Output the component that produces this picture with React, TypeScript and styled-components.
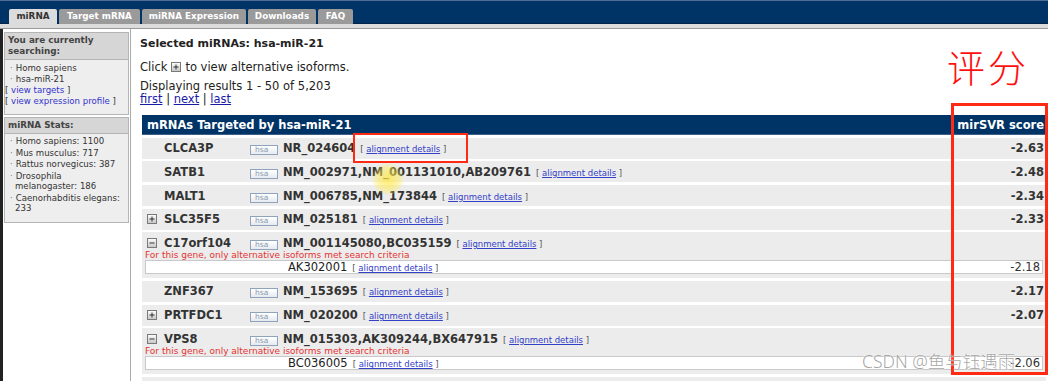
import React from 'react';
import styled, { createGlobalStyle } from 'styled-components';

const Global = createGlobalStyle`
  html, body { margin: 0; padding: 0; background: #fff; }
  body {
    font-family: "DejaVu Sans", Verdana, sans-serif;
    color: #222;
    overflow: hidden;
  }
`;

const Page = styled.div`
  width: 1048px;
  height: 381px;
  overflow: hidden;
  position: relative;
  display: flex;
  flex-direction: column;
`;

const TopBar = styled.div`
  height: 24px;
  box-sizing: border-box;
  background: #003366;
  border-top: 1px solid #4d6d92;
  border-bottom: 1px solid #00254d;
  display: flex;
  align-items: flex-end;
  padding-left: 9px;
  gap: 2px;
`;

const Tab = styled.div<{ $active?: boolean; $w: number }>`
  width: ${p => p.$w}px;
  height: 15px;
  margin-bottom: -1px;
  background: ${p => (p.$active ? '#dcdcdc' : '#9a9a9a')};
  color: ${p => (p.$active ? '#333' : '#fff')};
  font-weight: bold;
  font-size: 8.8px;
  line-height: 15px;
  text-align: center;
  border-radius: 2px 2px 0 0;
  white-space: nowrap;
`;

const TabStrip = styled.div`
  height: 4px;
  background: #dcdcdc;
  border-bottom: 1px solid #9a9a9a;
`;

const Body = styled.div`
  flex: 1;
  display: flex;
  min-height: 0;
`;

const Sidebar = styled.div`
  width: 131px;
  flex: none;
  box-sizing: border-box;
  border-left: 3px solid #222;
  border-right: 1px solid #aaa;
  padding: 3px 1px 0 1px;
  display: flex;
  flex-direction: column;
  gap: 2px;
`;

const Panel = styled.div`
  border: 1px solid #b4b4b4;
`;

const PanelHead = styled.div`
  background: #d6d6d6;
  border-bottom: 1px solid #b4b4b4;
  padding: 2px 3px;
  font-size: 8.8px;
  font-weight: bold;
  line-height: 11px;
  color: #444;
`;

const PanelBody = styled.div<{ $pt: number; $pb: number }>`
  background: #eeeeee;
  padding: ${p => p.$pt}px 0 ${p => p.$pb}px 0;
  font-size: 8.6px;
  color: #333;
`;

const Item = styled.div<{ $lh: number }>`
  line-height: ${p => p.$lh}px;
  padding-left: 5px;
  margin-bottom: 1px;
  &::before {
    content: '·';
    color: #777;
    margin-right: 3px;
  }
`;

const Cont = styled.span`
  padding-left: 5px;
`;

const LinkLine = styled.div`
  line-height: 10.5px;
  padding-left: 0;
  color: #333;
  a { color: #3333cc; text-decoration: none; }
`;

const Main = styled.div`
  flex: 1;
  min-width: 0;
  padding: 8px 2px 0 9px;
`;

const Title = styled.div`
  font-size: 11px;
  font-weight: bold;
  line-height: 14px;
  color: #222;
`;

const Para = styled.div<{ $mt: number; $lh: number }>`
  margin-top: ${p => p.$mt}px;
  font-size: 11.5px;
  line-height: ${p => p.$lh}px;
  color: #222;
  a { color: #1a1aa6; text-decoration: underline; }
`;

const Table = styled.div`
  margin: 9.5px 0 0 2px;
  display: flex;
  flex-direction: column;
  gap: 2.7px;
`;

const HeadRow = styled.div`
  height: 20px;
  box-sizing: border-box;
  background: #003366;
  border-bottom: 1px solid #3e6088;
  display: flex;
  align-items: center;
  justify-content: space-between;
  padding: 0 2px 0 5px;
  color: #fff;
  font-weight: bold;
  font-size: 11.5px;
`;

const Row = styled.div`
  background: #ececec;
  display: flex;
  flex-direction: column;
`;

const Line = styled.div`
  height: 21px;
  display: grid;
  grid-template-columns: 17px 86px 33px 1fr auto;
  align-items: center;
  padding: 0 2px 0 5px;
  font-size: 11.5px;
  font-weight: bold;
  color: #333;
  white-space: nowrap;
`;

const Gene = styled.span`
  color: #333;
`;

const Acc = styled.span`
  color: #333;
`;

const Badge = styled.span`
  display: inline-block;
  width: 26px;
  height: 8px;
  border: 1px solid #8fa3bb;
  background: linear-gradient(#ffffff, #e6eaef);
  color: #8f9db0;
  font-size: 7.5px;
  font-weight: normal;
  line-height: 8px;
  text-indent: 4px;
  box-sizing: content-box;
`;

const Details = styled.span`
  margin-left: 5px;
  font-size: 8.5px;
  font-weight: normal;
  color: #555;
  a { color: #3340c8; text-decoration: underline; }
`;

const Score = styled.span<{ $bold?: boolean }>`
  font-weight: ${p => (p.$bold ? 'bold' : 'normal')};
  color: #333;
  font-size: 11.5px;
`;

const Note = styled.div`
  margin-top: -2px;
  padding-left: 3px;
  font-size: 9px;
  line-height: 9px;
  color: #e53232;
`;

const SubRow = styled.div`
  margin: 0 3px 3.8px 3px;
  height: 14px;
  box-sizing: border-box;
  border: 1px solid #c8c8c8;
  background: #fff;
  display: flex;
  align-items: center;
  justify-content: space-between;
  padding: 0 2px 0 142px;
  font-size: 11.5px;
  color: #222;
  white-space: nowrap;
`;

const Overlay = styled.div<{ $x: number; $y: number; $w: number; $h: number; $b: number }>`
  position: absolute;
  left: ${p => p.$x}px;
  top: ${p => p.$y}px;
  width: ${p => p.$w}px;
  height: ${p => p.$h}px;
  box-sizing: border-box;
  border: ${p => p.$b}px solid #ff2a14;
  pointer-events: none;
`;

const Mark = styled.div`
  position: absolute;
  left: 947px;
  top: 41px;
  font-family: "Noto Sans CJK SC", "Noto Sans", sans-serif;
  font-size: 38px;
  line-height: 50px;
  color: #ff1010;
  font-weight: 300;
  letter-spacing: 3px;
`;

const Watermark = styled.div`
  position: absolute;
  left: 862px;
  top: 349px;
  font-family: "Noto Sans", "Noto Sans CJK SC", sans-serif;
  font-size: 17.5px;
  line-height: 24px;
  font-weight: 300;
  color: rgba(125, 125, 125, 0.7);
  text-shadow: 0 0 2px #fff, 0 0 1px #fff;
  white-space: nowrap;
`;

const Cursor = styled.div`
  position: absolute;
  left: 372px;
  top: 163px;
  width: 32px;
  height: 32px;
  border-radius: 50%;
  background: radial-gradient(circle, rgba(255, 230, 60, 0.75) 0%, rgba(255, 235, 80, 0.45) 50%, rgba(255, 240, 120, 0) 75%);
  pointer-events: none;
`;

const ToggleIcon: React.FC<{ kind: 'plus' | 'minus' }> = ({ kind }) => (
  <svg width="10" height="10" viewBox="0 0 10 10" style={{ display: 'block' }}>
    <defs>
      <linearGradient id={`g-${kind}`} x1="0" y1="0" x2="0" y2="1">
        <stop offset="0" stopColor="#ffffff" />
        <stop offset="1" stopColor="#c4c4c4" />
      </linearGradient>
    </defs>
    <rect x="0.5" y="0.5" width="9" height="9" fill={`url(#g-${kind})`} stroke="#7a7a7a" />
    <rect x="2.5" y="4.5" width="5" height="1" fill="#333" />
    {kind === 'plus' && <rect x="4.5" y="2.5" width="1" height="5" fill="#333" />}
  </svg>
);

const InlineIcon = styled.span`
  display: inline-block;
  vertical-align: -1px;
  margin: 0 4px 0 4px;
`;

type Rec = {
  gene: string;
  acc: string;
  score?: string;
  icon?: 'plus' | 'minus';
  sub?: { acc: string; score: string };
};

const rows: Rec[] = [
  { gene: 'CLCA3P', acc: 'NR_024604', score: '-2.63' },
  { gene: 'SATB1', acc: 'NM_002971,NM_001131010,AB209761', score: '-2.48' },
  { gene: 'MALT1', acc: 'NM_006785,NM_173844', score: '-2.34' },
  { gene: 'SLC35F5', acc: 'NM_025181', score: '-2.33', icon: 'plus' },
  { gene: 'C17orf104', acc: 'NM_001145080,BC035159', icon: 'minus', sub: { acc: 'AK302001', score: '-2.18' } },
  { gene: 'ZNF367', acc: 'NM_153695', score: '-2.17' },
  { gene: 'PRTFDC1', acc: 'NM_020200', score: '-2.07', icon: 'plus' },
  { gene: 'VPS8', acc: 'NM_015303,AK309244,BX647915', icon: 'minus', sub: { acc: 'BC036005', score: '-2.06' } },
  { gene: 'TIAM1', acc: 'NM_003253,BC143990', score: '-2.05', icon: 'plus' },
];

const AlignLink = () => (
  <Details>
    [ <a href="#">alignment details</a> ]
  </Details>
);

const tabs = [
  { label: 'miRNA', w: 48, active: true },
  { label: 'Target mRNA', w: 81 },
  { label: 'miRNA Expression', w: 104 },
  { label: 'Downloads', w: 68 },
  { label: 'FAQ', w: 35 },
];

export default function App() {
  return (
    <Page>
      <Global />
      <TopBar>
        {tabs.map(t => (
          <Tab key={t.label} $w={t.w} $active={t.active}>
            {t.label}
          </Tab>
        ))}
      </TopBar>
      <TabStrip />
      <Body>
        <Sidebar>
          <Panel>
            <PanelHead>
              You are currently
              <br />
              searching:
            </PanelHead>
            <PanelBody $pt={3} $pb={8}>
              <Item $lh={10}>Homo sapiens</Item>
              <Item $lh={10}>hsa-miR-21</Item>
              <LinkLine>
                [ <a href="#">view targets</a> ]
              </LinkLine>
              <LinkLine>
                [ <a href="#">view expression profile</a> ]
              </LinkLine>
            </PanelBody>
          </Panel>
          <Panel>
            <PanelHead>miRNA Stats:</PanelHead>
            <PanelBody $pt={2} $pb={7}>
              <Item $lh={10.5}>Homo sapiens: 1100</Item>
              <Item $lh={10.5}>Mus musculus: 717</Item>
              <Item $lh={10.5}>Rattus norvegicus: 387</Item>
              <Item $lh={10.5}>
                Drosophila
                <br />
                <Cont>melanogaster: 186</Cont>
              </Item>
              <Item $lh={10.5}>
                Caenorhabditis elegans:
                <br />
                <Cont>233</Cont>
              </Item>
            </PanelBody>
          </Panel>
        </Sidebar>
        <Main>
          <Title>Selected miRNAs: hsa-miR-21</Title>
          <Para $mt={9} $lh={14}>
            Click
            <InlineIcon>
              <ToggleIcon kind="plus" />
            </InlineIcon>
            to view alternative isoforms.
          </Para>
          <Para $mt={5.5} $lh={13}>
            Displaying results 1 - 50 of 5,203
            <br />
            <a href="#">first</a> | <a href="#">next</a> | <a href="#">last</a>
          </Para>
          <Table>
            <HeadRow>
              <span>mRNAs Targeted by hsa-miR-21</span>
              <span>mirSVR score</span>
            </HeadRow>
            {rows.map(r => (
              <Row key={r.gene}>
                <Line>
                  <span>{r.icon && <ToggleIcon kind={r.icon} />}</span>
                  <Gene>{r.gene}</Gene>
                  <span>
                    <Badge>hsa</Badge>
                  </span>
                  <span>
                    <Acc>{r.acc}</Acc>
                    <AlignLink />
                  </span>
                  <Score $bold>{r.score ?? ''}</Score>
                </Line>
                {r.sub && (
                  <>
                    <Note>For this gene, only alternative isoforms met search criteria</Note>
                    <SubRow>
                      <span>
                        {r.sub.acc}
                        <AlignLink />
                      </span>
                      <Score>{r.sub.score}</Score>
                    </SubRow>
                  </>
                )}
              </Row>
            ))}
          </Table>
        </Main>
      </Body>
      <Cursor />
      <Overlay $x={353} $y={133} $w={115} $h={30} $b={2.5} />
      <Overlay $x={951} $y={103} $w={97} $h={272} $b={3} />
      <Mark>评分</Mark>
      <Watermark>CSDN @鱼与钰遇雨</Watermark>
    </Page>
  );
}
